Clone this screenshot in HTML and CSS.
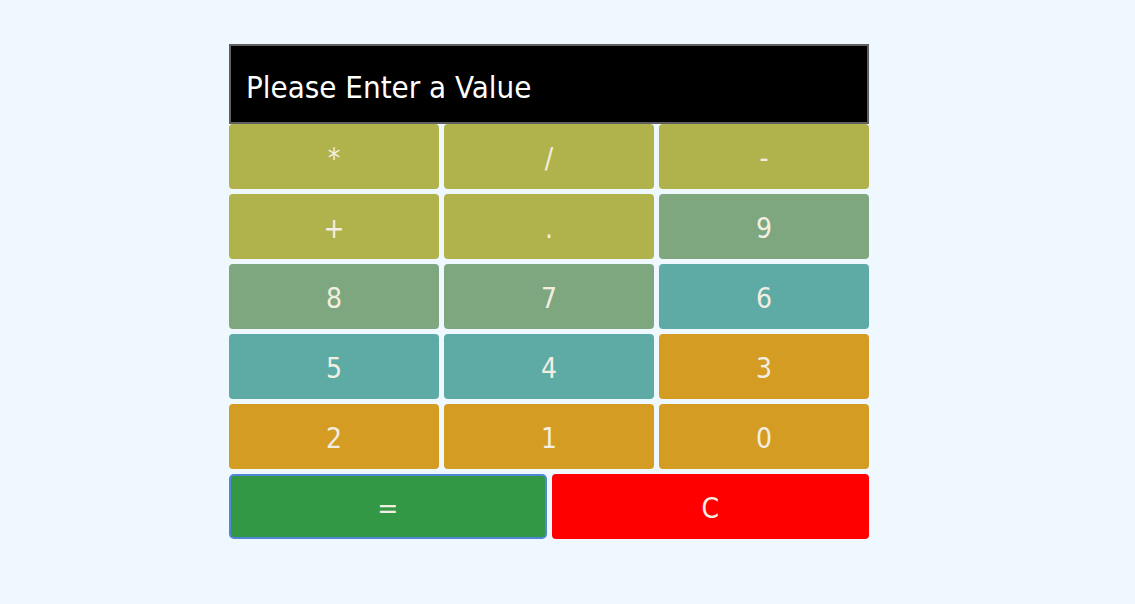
FILE: index.html
```html
<!DOCTYPE html>
<html>
<head>
<meta charset="utf-8">
<link rel="stylesheet" href="styles.css">
</head>
<body>
<div class="calc">
  <div class="display">Please Enter a Value</div>
  <div class="keys">
    <button class="key olive">*</button>
    <button class="key olive">/</button>
    <button class="key olive">-</button>
    <button class="key olive">+</button>
    <button class="key olive">.</button>
    <button class="key sage">9</button>
    <button class="key sage">8</button>
    <button class="key sage">7</button>
    <button class="key teal">6</button>
    <button class="key teal">5</button>
    <button class="key teal">4</button>
    <button class="key amber">3</button>
    <button class="key amber">2</button>
    <button class="key amber">1</button>
    <button class="key amber">0</button>
  </div>
  <div class="bottom">
    <button class="key equals">=</button>
    <button class="key clear">C</button>
  </div>
</div>
</body>
</html>
```
FILE: styles.css
```css
html, body {
  margin: 0;
  padding: 0;
  background: #f0f8ff;
}
body {
  padding: 44px 0 0 229px;
  font-family: "DejaVu Sans Condensed", "DejaVu Sans", sans-serif;
}
.calc {
  width: 640px;
  display: flex;
  flex-direction: column;
}
.display {
  box-sizing: border-box;
  height: 80px;
  background: #000;
  border: 2px solid #5f5f5f;
  color: #fff;
  font-size: 31px;
  padding: 5px 0 0 15px;
  display: flex;
  align-items: center;
}
.keys {
  display: grid;
  grid-template-columns: repeat(3, 1fr);
  column-gap: 5px;
  row-gap: 5px;
}
.bottom {
  display: grid;
  grid-template-columns: 1fr 1fr;
  column-gap: 5px;
  margin-top: 5px;
}
.key {
  box-sizing: border-box;
  height: 65px;
  border: none;
  border-radius: 4px;
  color: #f3eee2;
  font-family: "DejaVu Sans Condensed", "DejaVu Sans", sans-serif;
  font-size: 28px;
  padding: 4px 0 0 0;
  margin: 0;
}
.olive { background: #b0b24c; }
.sage { background: #7ea77f; }
.teal { background: #5eaba5; }
.amber { background: #d49c22; }
.equals {
  background: #329845;
  border: 2px solid #4f86d6;
  border-radius: 5px;
}
.clear { background: #ff0000; }
```
